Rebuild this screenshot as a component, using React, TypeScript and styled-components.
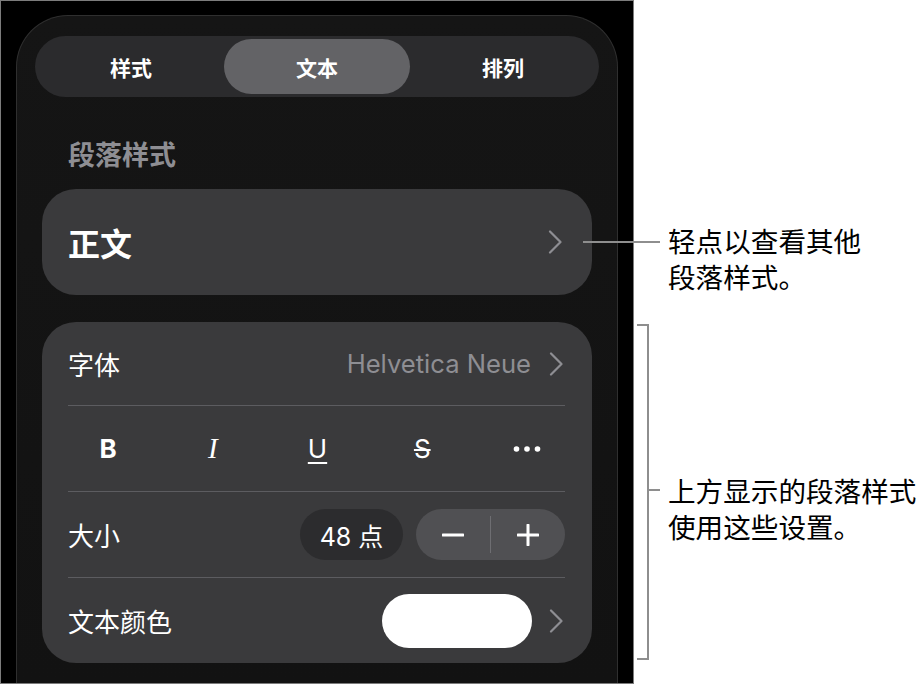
import styled, { createGlobalStyle } from "styled-components";

const GlobalStyle = createGlobalStyle`
  * { box-sizing: border-box; }
  body {
    margin: 0;
    background: #ffffff;
    font-family: "Inter", "Noto Sans CJK SC", sans-serif;
  }
`;

const Page = styled.div`
  position: relative;
  display: flex;
  width: 924px;
  height: 684px;
  overflow: hidden;
  background: #ffffff;
`;

const Device = styled.div`
  display: flex;
  width: 634px;
  height: 684px;
  padding: 14px 15px 0 15px;
  background: #000000;
  border: 1px solid #7c7c7c;
`;

const Panel = styled.div`
  flex: 1;
  padding: 20px 18px 0;
  background: linear-gradient(180deg, #151515 0%, #121212 100%);
  border: 1px solid #2f2f2f;
  border-bottom: none;
  border-radius: 52px 52px 0 0;
`;

const Segmented = styled.div`
  display: grid;
  grid-template-columns: repeat(3, 1fr);
  height: 61px;
  padding: 3px;
  border-radius: 31px;
  background: #2b2b2d;
`;

const Segment = styled.div<{ $active?: boolean }>`
  display: flex;
  align-items: center;
  justify-content: center;
  border-radius: 28px;
  background: ${(p) => (p.$active ? "#636366" : "transparent")};
  color: #ffffff;
  font-family: "Noto Sans CJK SC", sans-serif;
  font-size: 21px;
  font-weight: 700;
`;

const SectionTitle = styled.div`
  margin: 39px 0 0 33px;
  font-family: "Noto Sans CJK SC", sans-serif;
  font-size: 27px;
  line-height: 36px;
  font-weight: 600;
  color: #8e8e93;
`;

const Card = styled.div<{ $top: number }>`
  margin: ${(p) => p.$top}px 7px 0;
  background: #3a3a3c;
  border-radius: 34px;
  padding: 0 27px 0 26px;
`;

const StyleCard = styled(Card)`
  display: flex;
  align-items: center;
  justify-content: space-between;
  height: 106px;
  padding-right: 28px;
`;

const StyleName = styled.div`
  font-family: "Noto Sans CJK SC", sans-serif;
  font-size: 32px;
  font-weight: 700;
  color: #ffffff;
`;

const Row = styled.div<{ $h: number; $first?: boolean }>`
  display: flex;
  align-items: center;
  justify-content: space-between;
  height: ${(p) => p.$h}px;
  border-top: ${(p) => (p.$first ? "none" : "1px solid #5c5c60")};
`;

const Label = styled.div`
  font-family: "Noto Sans CJK SC", sans-serif;
  font-size: 26px;
  color: #ffffff;
`;

const Right = styled.div<{ $gap: number }>`
  display: flex;
  align-items: center;
  gap: ${(p) => p.$gap}px;
`;

const Value = styled.div`
  font-family: "Inter", sans-serif;
  font-size: 25.6px;
  color: #8e8e93;
`;

const FormatRow = styled(Row)`
  padding: 0 24px 0 26px;
`;

const FormatButton = styled.div<{ $kind: "b" | "i" | "u" | "s" | "more" }>`
  display: flex;
  align-items: center;
  justify-content: center;
  width: 28px;
  height: 40px;
  color: #ffffff;
  font-family: ${(p) =>
    p.$kind === "i" ? '"Liberation Serif", serif' : '"Inter", sans-serif'};
  font-size: ${(p) => (p.$kind === "i" ? "29px" : "26px")};
  font-weight: ${(p) => (p.$kind === "b" ? 700 : 400)};
  font-style: ${(p) => (p.$kind === "i" ? "italic" : "normal")};
  text-decoration: ${(p) =>
    p.$kind === "u" ? "underline" : p.$kind === "s" ? "line-through" : "none"};
  text-decoration-thickness: 2px;
  text-underline-offset: 4px;
`;

const SizePill = styled.div`
  display: flex;
  align-items: center;
  justify-content: center;
  width: 103px;
  height: 51px;
  border-radius: 26px;
  background: #2c2c2e;
  color: #ffffff;
  font-family: "Inter", "Noto Sans CJK SC", sans-serif;
  font-size: 25px;
`;

const Stepper = styled.div`
  display: grid;
  grid-template-columns: 1fr 1px 1fr;
  align-items: center;
  width: 149px;
  height: 51px;
  border-radius: 26px;
  background: #505053;
`;

const StepButton = styled.div`
  display: flex;
  align-items: center;
  justify-content: center;
`;

const StepDivider = styled.div`
  height: 37px;
  background: #6e6e72;
`;

const Swatch = styled.div`
  width: 150px;
  height: 54px;
  border-radius: 27px;
  background: #ffffff;
`;

const Notes = styled.div`
  flex: 1;
  padding: 222px 0 0 34px;
`;

const Note = styled.div<{ $top: number }>`
  margin-top: ${(p) => p.$top}px;
  font-family: "Noto Sans CJK SC", sans-serif;
  font-size: 27.6px;
  line-height: 36px;
  color: #000000;
`;

const Leader = styled.div`
  position: absolute;
  left: 583px;
  top: 241px;
  width: 77px;
  height: 2px;
  background: #8e8e8e;
`;

const Bracket = styled.div`
  position: absolute;
  left: 637px;
  top: 324px;
  width: 12px;
  height: 336px;
  border: 2px solid #8e8e8e;
  border-left: none;
`;

const BracketTick = styled.div`
  position: absolute;
  left: 649px;
  top: 489px;
  width: 11px;
  height: 2px;
  background: #8e8e8e;
`;

const Chevron = () => (
  <svg width="16" height="24" viewBox="0 0 16 24">
    <path
      d="M2 1.5 L12.5 12 L2 22.5"
      fill="none"
      stroke="#8e8e93"
      strokeWidth="2.2"
      strokeLinecap="round"
      strokeLinejoin="round"
    />
  </svg>
);

const Dots = () => (
  <svg width="28" height="8" viewBox="0 0 28 8">
    <circle cx="3.5" cy="4" r="2.8" fill="#fff" />
    <circle cx="14" cy="4" r="2.8" fill="#fff" />
    <circle cx="24.5" cy="4" r="2.8" fill="#fff" />
  </svg>
);

const Minus = () => (
  <svg width="22" height="22" viewBox="0 0 22 22">
    <path d="M1 11 H21" stroke="#fff" strokeWidth="3" strokeLinecap="round" />
  </svg>
);

const Plus = () => (
  <svg width="22" height="22" viewBox="0 0 22 22">
    <path d="M1 11 H21 M11 1 V21" stroke="#fff" strokeWidth="3" strokeLinecap="round" />
  </svg>
);

const tabs = ["样式", "文本", "排列"];

export default function App() {
  return (
    <Page>
      <GlobalStyle />
      <Device>
        <Panel>
          <Segmented>
            {tabs.map((t) => (
              <Segment key={t} $active={t === "文本"}>
                {t}
              </Segment>
            ))}
          </Segmented>

          <SectionTitle>段落样式</SectionTitle>

          <StyleCard $top={17}>
            <StyleName>正文</StyleName>
            <Chevron />
          </StyleCard>

          <Card $top={27}>
            <Row $h={83} $first>
              <Label>字体</Label>
              <Right $gap={18}>
                <Value>Helvetica Neue</Value>
                <Chevron />
              </Right>
            </Row>
            <FormatRow $h={86}>
              <FormatButton $kind="b">B</FormatButton>
              <FormatButton $kind="i">I</FormatButton>
              <FormatButton $kind="u">U</FormatButton>
              <FormatButton $kind="s">S</FormatButton>
              <FormatButton $kind="more">
                <Dots />
              </FormatButton>
            </FormatRow>
            <Row $h={86}>
              <Label>大小</Label>
              <Right $gap={13}>
                <SizePill>48 点</SizePill>
                <Stepper>
                  <StepButton>
                    <Minus />
                  </StepButton>
                  <StepDivider />
                  <StepButton>
                    <Plus />
                  </StepButton>
                </Stepper>
              </Right>
            </Row>
            <Row $h={86}>
              <Label>文本颜色</Label>
              <Right $gap={17}>
                <Swatch />
                <Chevron />
              </Right>
            </Row>
          </Card>
        </Panel>
      </Device>

      <Notes>
        <Note $top={0}>
          轻点以查看其他
          <br />
          段落样式。
        </Note>
        <Note $top={178}>
          上方显示的段落样式
          <br />
          使用这些设置。
        </Note>
      </Notes>

      <Leader />
      <Bracket />
      <BracketTick />
    </Page>
  );
}
